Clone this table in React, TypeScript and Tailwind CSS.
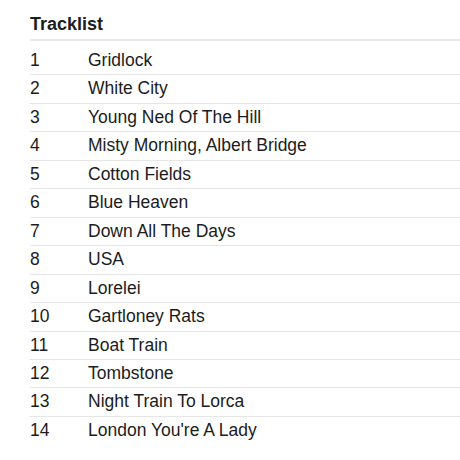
import React from 'react';

const tracks = [
  'Gridlock',
  'White City',
  'Young Ned Of The Hill',
  'Misty Morning, Albert Bridge',
  'Cotton Fields',
  'Blue Heaven',
  'Down All The Days',
  'USA',
  'Lorelei',
  'Gartloney Rats',
  'Boat Train',
  'Tombstone',
  'Night Train To Lorca',
  "London You're A Lady",
];

export default function App() {
  return (
    <div className="w-[460px] h-[460px] bg-white overflow-hidden pl-[30px] text-[#1c1c1c] font-['Liberation_Sans',Arial,sans-serif]">
      {/* Header */}
      <div className="pt-[14px] pb-[5px] border-b-2 border-[#e9e9e9]">
        <h2 className="text-[18px] leading-[20px] font-bold">Tracklist</h2>
      </div>

      {/* Rows */}
      <div className="mt-[6px]">
        {tracks.map((title, i) => (
          <div
            key={title}
            className={`flex text-[17.5px] leading-[27.45px] ${
              i < tracks.length - 1 ? 'border-b border-[#e6e6e6]' : ''
            }`}
          >
            <span className="w-[58px] shrink-0">{i + 1}</span>
            <span>{title}</span>
          </div>
        ))}
      </div>
    </div>
  );
}
